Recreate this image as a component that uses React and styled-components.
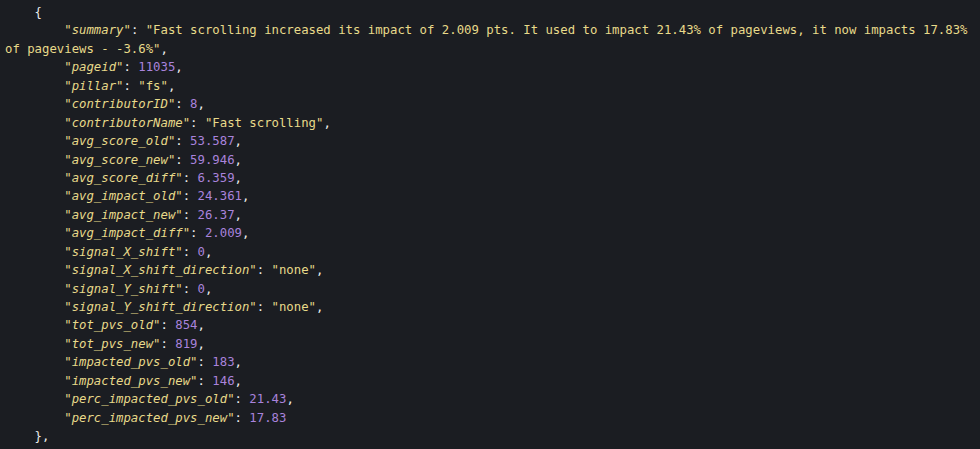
import React from 'react';
import styled, { createGlobalStyle } from 'styled-components';

const GlobalStyle = createGlobalStyle`
  html, body {
    margin: 0;
    padding: 0;
    background: #1b1d22;
  }
`;

const Container = styled.pre`
  margin: 0;
  padding: 3px 0 0 5px;
  width: 980px;
  height: 449px;
  box-sizing: border-box;
  overflow: hidden;
  background-color: #1b1d22;
  color: #ececec;
  font-family: "DejaVu Sans Mono", "Liberation Mono", monospace;
  font-size: 12.3px;
  line-height: 18.45px;
  white-space: pre;
`;

const Line = styled.div`
  height: 18.45px;
`;

const Key = styled.span`
  color: #e8da8a;
  font-style: italic;
`;

const Str = styled.span`
  color: #e8da8a;
`;

const Num = styled.span`
  color: #a983dc;
`;

const Punct = styled.span`
  color: #ececec;
`;

const rows = [
  ['pageid', 11035],
  ['pillar', 'fs'],
  ['contributorID', 8],
  ['contributorName', 'Fast scrolling'],
  ['avg_score_old', 53.587],
  ['avg_score_new', 59.946],
  ['avg_score_diff', 6.359],
  ['avg_impact_old', 24.361],
  ['avg_impact_new', 26.37],
  ['avg_impact_diff', 2.009],
  ['signal_X_shift', 0],
  ['signal_X_shift_direction', 'none'],
  ['signal_Y_shift', 0],
  ['signal_Y_shift_direction', 'none'],
  ['tot_pvs_old', 854],
  ['tot_pvs_new', 819],
  ['impacted_pvs_old', 183],
  ['impacted_pvs_new', 146],
  ['perc_impacted_pvs_old', 21.43],
  ['perc_impacted_pvs_new', 17.83],
];

const Value = ({ value }) =>
  typeof value === 'number' ? <Num>{value}</Num> : <Str>"{value}"</Str>;

export default function App() {
  return (
    <>
      <GlobalStyle />
      <Container>
        <Line><Punct>{'    {'}</Punct></Line>
        <Line>
          {'        '}<Key>"summary"</Key><Punct>: </Punct>
          <Str>"Fast scrolling increased its impact of 2.009 pts. It used to impact 21.43% of pageviews, it now impacts 17.83%</Str>
        </Line>
        <Line>
          <Str>of pageviews - -3.6%"</Str><Punct>,</Punct>
        </Line>
        {rows.map(([key, value], i) => (
          <Line key={key}>
            {'        '}<Key>"{key}"</Key><Punct>: </Punct>
            <Value value={value} />
            {i < rows.length - 1 && <Punct>,</Punct>}
          </Line>
        ))}
        <Line><Punct>{'    },'}</Punct></Line>
      </Container>
    </>
  );
}
